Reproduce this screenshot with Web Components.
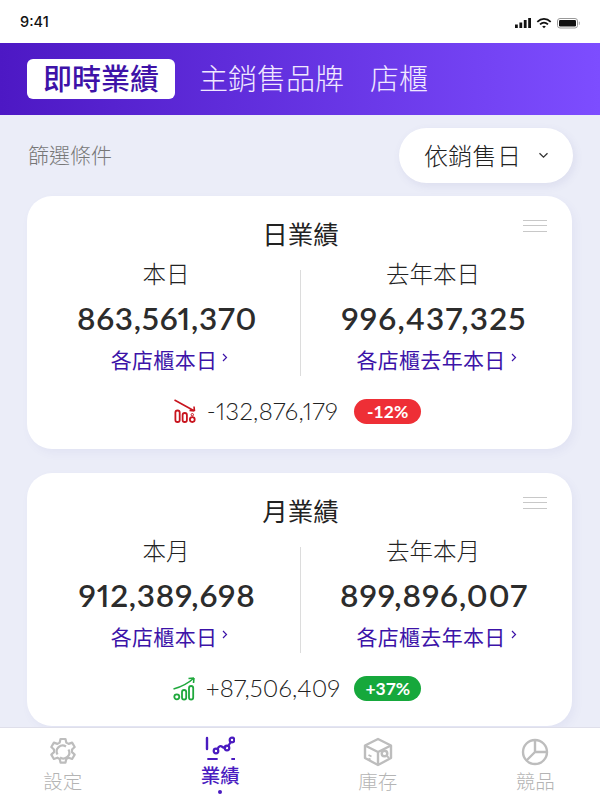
<!DOCTYPE html>
<html lang="zh-Hant"><head><meta charset="utf-8"><title>即時業績</title>
<style>
html,body{margin:0;padding:0;width:600px;height:800px;overflow:hidden;background:#ebedf8}
body{font-family:"Noto Sans CJK TC","Noto Sans",sans-serif}
</style></head><body>
<app-shell>
<status-bar></status-bar>
<top-tabs></top-tabs>
<main-area>
<filter-row></filter-row>
<perf-card heading="日業績" left="本日" right="去年本日" lval="863,561,370" rval="996,437,325" delta="-132,876,179" pct="-12%" trend="down" rs="1.25"></perf-card>
<perf-card heading="月業績" left="本月" right="去年本月" lval="912,389,698" rval="899,896,007" delta="+87,506,409" pct="+37%" trend="up" rs="0.95"></perf-card>
</main-area>
<bottom-nav></bottom-nav>
</app-shell>
<script>
const def=(n,html,lazy)=>customElements.define(n,class extends HTMLElement{constructor(){super();this.attachShadow({mode:'open'});if(!lazy)this.shadowRoot.innerHTML=html}connectedCallback(){if(lazy)this.shadowRoot.innerHTML=html(this)}});
def('app-shell',`<style>:host{display:flex;flex-direction:column;width:600px;height:800px;overflow:hidden}</style><slot></slot>`);
def('status-bar',`<style>:host{display:flex;flex:0 0 43px;height:43px;background:#fff;align-items:center;justify-content:space-between;padding:0 20px 0 20px;box-sizing:border-box;font:500 14.5px/1 Inter,"Liberation Sans",sans-serif;color:#111}
svg{display:block}span{position:relative;top:1px}</style><span>9:41</span>
<svg width="65" height="12" viewBox="0 0 65 12" style="margin-top:2px"><g fill="#111"><rect x="0" y="7.500" width="2.800" height="3.500"/><rect x="4.400" y="5.500" width="2.800" height="5.500"/><rect x="8.800" y="3" width="2.800" height="8"/><rect x="13.200" y="1" width="2.800" height="10"/></g><g fill="none" stroke="#111" stroke-width="1.800"><path d="M22.300 4.800c4-3.800 9.400-3.800 13.400 0"/><path d="M25 7.400c2.500-2.200 5.500-2.200 8 0"/></g><path d="M27.200 9.400c1.100-.9 2.500-.9 3.600 0L29 11.300z" fill="#111"/><rect x="42.500" y="1.500" width="20" height="9.500" rx="2.500" fill="none" stroke="#999" stroke-width="1"/><rect x="44" y="3" width="17" height="6.500" rx="1.200" fill="#111"/><rect x="63.800" y="4.700" width="1" height="3" fill="#aaa"/></svg>`);
def('top-tabs',`<style>:host{display:flex;flex:0 0 72px;height:72px;box-sizing:border-box;align-items:center;padding:0 0 0 27px;background:linear-gradient(90deg,#4d18c4,#7d4dff);font:300 29px/40px "Noto Sans CJK TC",sans-serif;color:#f0e8ff}
.a{background:#fff;color:#3e12a8;width:148px;height:40px;line-height:37px;border-radius:6px;text-align:center;font-weight:500;margin-right:24px}.b{margin-right:26px}.b,.c{margin-bottom:5px}</style><div class="a">即時業績</div><div class="b">主銷售品牌</div><div class="c">店櫃</div>`);
def('main-area',`<style>:host{display:flex;flex-direction:column;flex:1 1 0;min-height:0;overflow:hidden;background:#ebedf8;padding:13px 27px 0 27px;box-sizing:border-box;position:relative}</style><slot></slot>`);
def('filter-row',`<style>:host{display:flex;flex:none;align-items:center;justify-content:space-between;height:55px;margin-bottom:13px;padding-left:1px}
.l{font:300 21px/1 "Noto Sans CJK TC",sans-serif;color:#777;margin-bottom:2px}
.p{display:flex;align-items:center;box-sizing:border-box;width:174px;height:55px;border-radius:28px;background:#fff;box-shadow:2px 3px 8px rgba(90,90,160,.10);padding-left:25px;padding-bottom:2px;font:300 24px/1 "Noto Sans CJK TC",sans-serif;color:#222;letter-spacing:.3px}
svg{margin-left:17px;margin-top:2px}</style><div class="l">篩選條件</div><div class="p">依銷售日<svg width="11" height="7" viewBox="0 0 11 7"><path d="M1.500 1.200 5.500 5.200 9.500 1.200" fill="none" stroke="#333" stroke-width="1.300"/></svg></div>`);
const ICO={down:`<svg width="23" height="25" viewBox="0 0 23 25" fill="none" stroke="#c8141e" stroke-width="1.800"><path d="M.5 1 20.500 12M20.500 12l-5-.5M20.500 12l-.5-4.500" stroke-width="1.600"/><rect x="1.400" y="11.500" width="4.300" height="11.500" rx="2.100"/><rect x="8.600" y="14" width="4.300" height="9" rx="2.100"/><circle cx="18.300" cy="20.600" r="2.400"/><circle cx="18.300" cy="15.700" r="1.200" stroke-width="1"/></svg>`,
up:`<svg width="23" height="25" viewBox="0 0 23 25" fill="none" stroke="#1fa83c" stroke-width="1.800"><path d="M.5 13C8 11 15 7.500 21 2M21 2l-5.500.5M21 2l-.5 5" stroke-width="1.600"/><circle cx="3.800" cy="20.800" r="2.500"/><rect x="9" y="14" width="4.200" height="9.500" rx="2.100"/><rect x="16" y="10" width="4.200" height="13.500" rx="2.100"/></svg>`};
const chev=`<svg width="6" height="9" viewBox="0 0 6 9"><path d="M1 1l3.500 3.500L1 8" fill="none" stroke="#3c13a8" stroke-width="1.200"/></svg>`;
def('perf-card',t=>{const g=a=>t.getAttribute(a)||'';const up=g('trend')==='up';return `<style>:host{display:block;flex:none;position:relative;box-sizing:border-box;height:253px;margin-bottom:24px;margin-right:1px;background:#fff;border-radius:25px;box-shadow:3px 4px 10px rgba(90,90,170,.06);padding-top:19px;color:#222}
h2{margin:0;text-align:center;font:400 25.500px/36px "Noto Sans CJK TC",sans-serif;color:#222;padding-left:2px}
.m{position:absolute;right:25px;top:24px;width:24px;height:10px;border-top:1px solid #c8c8c8;border-bottom:1px solid #c8c8c8}.m::after{content:"";display:block;margin-top:4px;border-top:1px solid #c8c8c8}
.g{display:grid;grid-template-columns:273px 1fr;height:106px;margin-top:19px}
.c{text-align:center;display:flex;flex-direction:column;align-items:center;padding-left:7px}.c+.c{border-left:1px solid #dcdcdc;padding-left:0;padding-right:5px}
.t{font:300 23.500px/28px "Noto Sans CJK TC",sans-serif;margin:-11px 2px 0 0;color:#222}
.v{font:600 31.500px/40px Lato,"Liberation Sans",sans-serif;font-variant-numeric:proportional-nums;letter-spacing:.75px;color:#2c2c2c;margin-top:11px}
.c+.c .v{letter-spacing:${g('rs')}px}
.k{font:400 21px/28px "Noto Sans CJK TC",sans-serif;letter-spacing:.3px;color:#3c13a8;margin:7px 0 0 5px;display:flex;align-items:center;gap:5px}
.k svg{margin-top:-3px}
.d{display:flex;align-items:center;justify-content:center;margin-top:22px;height:26px;padding-right:${up?5:4}px}
.n{font:300 24px/1 Lato,"Liberation Sans",sans-serif;font-variant-numeric:proportional-nums;letter-spacing:${up?.1:.3}px;color:#222;margin:0 ${up?14:16}px 0 10px}
.b{width:67px;height:25px;border-radius:13px;background:${up?'#16a83c':'#ee2f36'};color:#fff;text-align:center;font:700 17.500px/25px Lato,"Liberation Sans",sans-serif}
</style><h2>${g('heading')}</h2><div class="m"></div>
<div class="g"><div class="c"><div class="t">${g('left')}</div><div class="v">${g('lval')}</div><div class="k">各店櫃本日${chev}</div></div>
<div class="c"><div class="t">${g('right')}</div><div class="v">${g('rval')}</div><div class="k">各店櫃去年本日${chev}</div></div></div>
<div class="d">${ICO[g('trend')]}<span class="n">${g('delta')}</span><span class="b">${g('pct')}</span></div>`},true);
const gear=`<svg width="30" height="30" viewBox="0 0 30 30" fill="none" stroke="#bdbdbd" stroke-width="2.200" stroke-linejoin="round"><path d="M12.500 2h5l.8 3.600 2.300 1.300 3.500-1.300 2.600 4.400-2.700 2.500v2.600l2.700 2.500-2.600 4.400-3.500-1.300-2.300 1.300-.8 3.600h-5l-.8-3.600-2.300-1.300-3.500 1.300-2.600-4.400 2.700-2.500V12.500L3.300 10l2.600-4.400 3.500 1.300 2.300-1.300z"/><path d="M9.500 17.500a6 6 0 0 1 8.500-8M20.500 12.500a6 6 0 0 1-8.500 8"/></svg>`;
const chart=`<svg width="30" height="30" viewBox="0 0 30 30" fill="none" stroke="#4a1bc0" stroke-width="2.200" stroke-linecap="round"><path d="M2 3v11" stroke-width="2.400"/><circle cx="11" cy="16" r="2.300"/><circle cx="22" cy="13" r="2.300"/><circle cx="27" cy="5" r="2.300"/><path d="M12.500 14c1.500-3 3-3.500 5-2 1.300 1 1.800 1 2.800.3M23.300 11l2.400-4"/><path d="M3 24h9M27 24h3" stroke-width="1.800"/></svg>`;
const box=`<svg width="30" height="30" viewBox="0 0 30 30" fill="none" stroke="#bdbdbd" stroke-width="2.400" stroke-linejoin="round"><path d="M15 2 28 8.500V21L15 28 2 21V8.500z"/><path d="M2 8.500 15 15l13-6.500M15 15v13"/><circle cx="21.500" cy="16.500" r="2.800"/><path d="M24 19l2 2M5.500 18l3 1.500M5.500 21.500l2 1" stroke-width="1.800"/></svg>`;
const pie=`<svg width="28" height="28" viewBox="0 0 28 28" fill="none" stroke="#bdbdbd" stroke-width="2.400"><circle cx="14" cy="14" r="12"/><path d="M14 2v12H26M14 14 5.500 22.500"/></svg>`;
def('nav-item',t=>{const a=t.hasAttribute('active');return `<style>:host{display:flex;flex-direction:column;align-items:center;position:relative}
.i{height:30px;margin-top:${a?'7':'9'}px;display:flex;align-items:center;justify-content:center}
.l{font:${a?500:300} 19.500px/1 "Noto Sans CJK TC",sans-serif;color:${a?'#4a1bc0':'#b4b4b4'};margin-top:${a?'0':'4'}px}
.o{width:4px;height:4px;border-radius:50%;background:#4a1bc0;margin-top:5px}</style><div class="i">${{gear,chart,box,pie}[t.getAttribute('icon')]}</div><div class="l">${t.getAttribute('label')}</div>${a?'<div class="o"></div>':''}`},true);
def('bottom-nav',`<style>:host{display:grid;grid-template-columns:repeat(4,157.500px);flex:0 0 73px;height:73px;box-sizing:border-box;background:#fff;border-top:1px solid #dfdfea;margin-left:-16px;padding:0}</style><nav-item icon="gear" label="設定"></nav-item><nav-item icon="chart" label="業績" active></nav-item><nav-item icon="box" label="庫存"></nav-item><nav-item icon="pie" label="競品"></nav-item>`);
</script>
</body></html>
